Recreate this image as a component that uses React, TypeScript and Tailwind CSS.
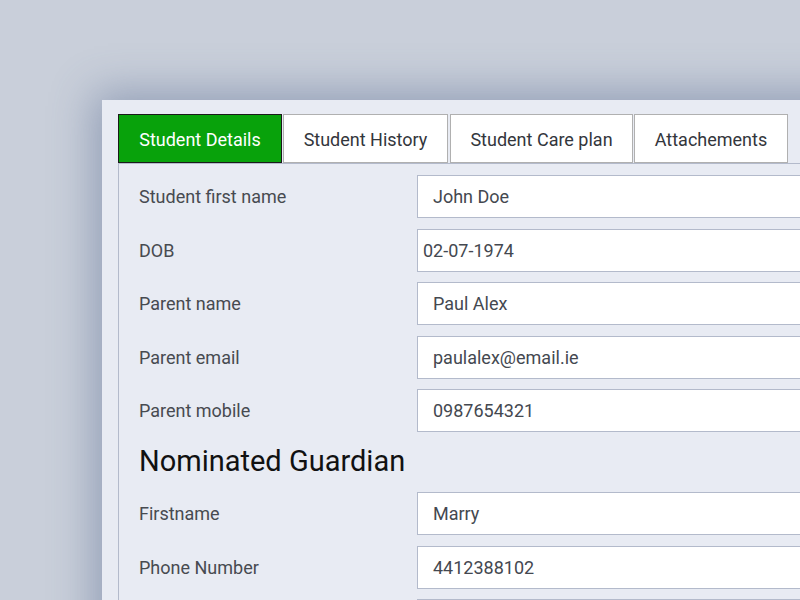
import React from "react";

const tabs = [
  { label: "Student Details", w: "w-[164px]", active: true },
  { label: "Student History", w: "w-[165px]", active: false },
  { label: "Student Care plan", w: "w-[183px]", active: false },
  { label: "Attachements", w: "w-[154px]", active: false },
];

function Row({ label, value, tight }: { label: string; value: string; tight?: boolean }) {
  return (
    <div className="flex items-center h-[43px]">
      <div className="w-[278px] shrink-0 text-[18px] text-[#474a50]">{label}</div>
      <div
        className={
          "h-[43px] w-[500px] shrink-0 bg-white border border-[#b3bacb] flex items-center text-[18px] text-[#444850] " +
          (tight ? "pl-[5px]" : "pl-[15px]")
        }
      >
        {value}
      </div>
    </div>
  );
}

export default function App() {
  return (
    <div
      className="w-[800px] h-[600px] overflow-hidden bg-[#c9cfda] relative"
      style={{ fontFamily: "Roboto, 'Noto Sans', sans-serif" }}
    >
      <div className="ml-[102px] mt-[100px] w-[760px] h-[560px] bg-[#e8ebf3] shadow-[0_0_40px_8px_rgba(80,100,140,0.45)] pl-[16px] pt-[14px]">
        <div className="flex gap-[1px] items-end">
          {tabs.map((t, i) => (
            <div
              key={t.label}
              className={
                "h-[49px] flex items-center justify-center text-[18px] shrink-0 pt-[2px] " +
                t.w +
                " " +
                (i === 2 ? "ml-[1px] " : "") +
                (t.active
                  ? "bg-[#08a20b] text-white border border-[#1a1a1a]"
                  : "bg-white text-[#33363c] border border-[#b0b0b0]")
              }
            >
              {t.label}
            </div>
          ))}
        </div>
        <div className="border-l border-t border-[#b3bacb] pl-[20px] pt-[11px] h-[600px]">
          <div className="flex flex-col gap-[10.5px]">
            <Row label="Student first name" value="John Doe" />
            <Row label="DOB" value="02-07-1974" tight />
            <Row label="Parent name" value="Paul Alex" />
            <Row label="Parent email" value="paulalex@email.ie" />
            <Row label="Parent mobile" value="0987654321" />
          </div>
          <div className="h-[60px] flex items-center text-[29px] text-[#111111]">Nominated Guardian</div>
          <div className="flex flex-col gap-[10.5px]">
            <Row label="Firstname" value="Marry" />
            <Row label="Phone Number" value="4412388102" />
            <Row label="" value="" />
          </div>
        </div>
      </div>
    </div>
  );
}
